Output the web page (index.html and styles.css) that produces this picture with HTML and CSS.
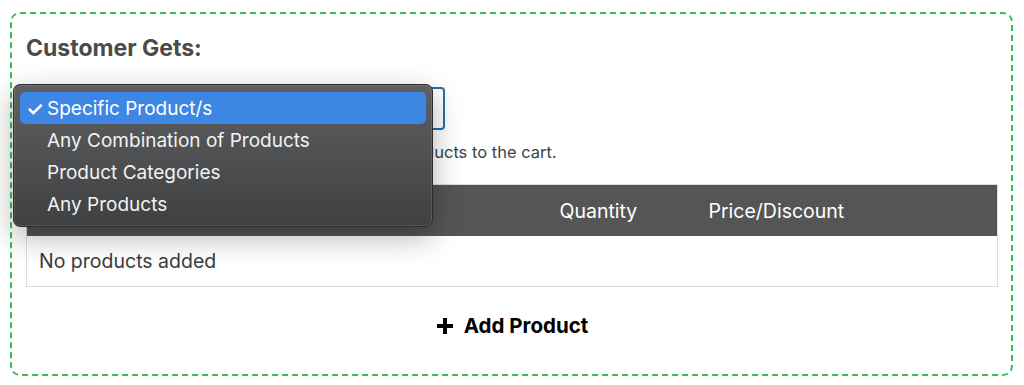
FILE: index.html
```html
<!DOCTYPE html>
<html lang="en">
<head>
  <meta charset="UTF-8" />
  <title>Customer Gets</title>
  <link rel="stylesheet" href="styles.css">
</head>
<body>

  <div class="caja">
    <h2 class="titulo">Customer Gets:</h2>

    <div class="select-wrap">
      <div class="select-box"></div>

      <ul class="menu">
        <li class="activo"><span class="check">✓</span>Specific Product/s</li>
        <li>Any Combination of Products</li>
        <li>Product Categories</li>
        <li>Any Products</li>
      </ul>
    </div>

    <p class="descripcion">Customers will get the products when they add products to the cart.</p>

    <table class="tabla">
      <colgroup>
        <col style="width: 521px" />
        <col style="width: 149px" />
        <col />
      </colgroup>
      <thead>
        <tr>
          <th>Product</th>
          <th>Quantity</th>
          <th>Price/Discount</th>
        </tr>
      </thead>
      <tbody>
        <tr>
          <td colspan="3">No products added</td>
        </tr>
      </tbody>
    </table>

    <div class="agregar">
      <svg width="18" height="18" viewBox="0 0 18 18"><path d="M9 1v16M1 9h16" stroke="#000" stroke-width="4" /></svg>
      <span>Add Product</span>
    </div>
  </div>

</body>
</html>
```

FILE: styles.css
```css
body {
  margin: 0;
  padding: 0;
  font-family: Inter, "Liberation Sans", sans-serif;
  background: #fff;
}

.caja {
  margin: 12px 11px 0 10px;
  height: 364px;
  box-sizing: border-box;
  border: 2px dashed #36bd58;
  border-radius: 10px;
  padding: 20px 13px 0 14px;
}

.titulo {
  margin: 0;
  font-size: 23px;
  line-height: 28px;
  font-weight: 700;
  color: #4a4a4a;
}

.select-wrap {
  position: relative;
  margin-top: 25px;
  width: 419px;
  height: 43px;
}

.select-box {
  width: 100%;
  height: 100%;
  box-sizing: border-box;
  border: 2px solid #2271b1;
  border-radius: 4px;
}

.menu {
  position: absolute;
  left: -13px;
  top: -3px;
  width: 420px;
  height: 143px;
  box-sizing: border-box;
  margin: 0;
  padding: 7px 6px;
  list-style: none;
  border-radius: 7px;
  border: 1px solid #2c2c2d;
  background: linear-gradient(#5e6062, #3f4042);
  box-shadow: inset 0 0 0 1px rgba(255, 255, 255, 0.12), 0 10px 30px rgba(0, 0, 0, 0.3);
  z-index: 2;
}

.menu li {
  position: relative;
  height: 32px;
  line-height: 34px;
  padding-left: 27px;
  font-size: 19px;
  color: #f2f2f2;
  border-radius: 5px;
}

.menu li.activo {
  background: #3e86e4;
  color: #fff;
}

.check {
  position: absolute;
  left: 6px;
  top: 0;
  font-size: 20px;
  font-weight: 600;
}

.descripcion {
  margin: 12px 0 0 0;
  font-size: 16.5px;
  line-height: 20px;
  color: #3c434a;
}

.tabla {
  margin-top: 22px;
  width: 972px;
  border-collapse: collapse;
  table-layout: fixed;
  border: 1px solid #dcdcde;
}

.tabla th {
  background: #555;
  color: #fff;
  font-weight: 400;
  font-size: 19.5px;
  text-align: left;
  height: 51px;
  padding: 0 12px;
}

.tabla td {
  height: 50px;
  padding: 0 12px;
  font-size: 19.5px;
  color: #3c3c3c;
}

.agregar {
  margin-top: 26px;
  display: flex;
  justify-content: center;
  align-items: center;
  gap: 10px;
  font-size: 20.5px;
  font-weight: 700;
  color: #000;
  line-height: 26px;
}
```
